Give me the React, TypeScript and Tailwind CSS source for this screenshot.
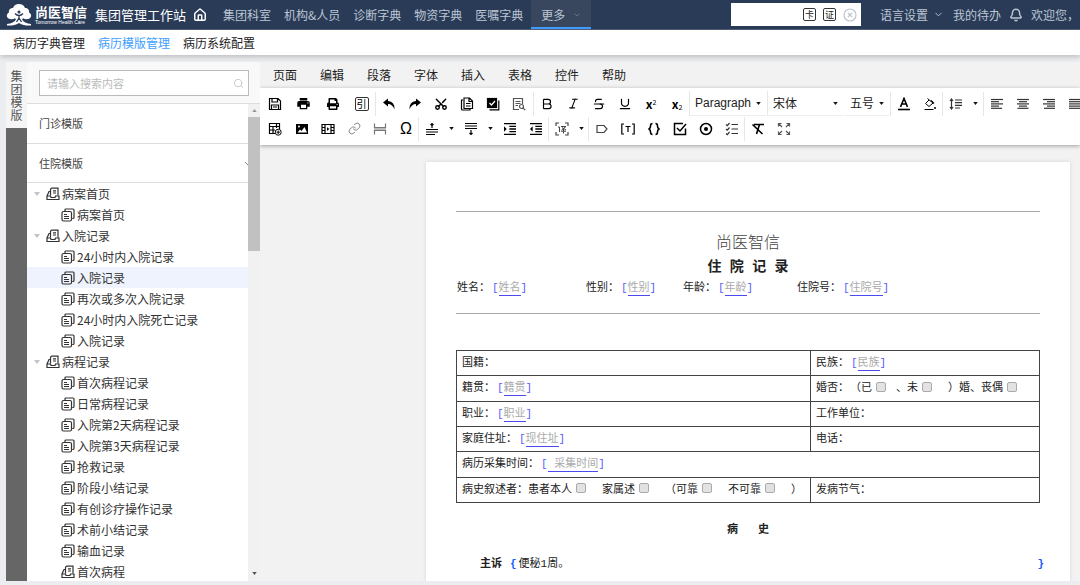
import type { ReactNode } from "react";
import {
  Bell,
  Bold,
  ChevronDown,
  House,
  Italic,
  Link,
  Scissors,
  Search,
  Strikethrough,
  Underline,
} from "lucide-react";
import {
  MdFormatIndentDecrease,
  MdFormatIndentIncrease,
  MdLocalPrintshop,
  MdReply,
} from "react-icons/md";
import { FaPrint } from "react-icons/fa";
import clsx from "clsx";

const NAV = ["集团科室", "机构&人员", "诊断字典", "物资字典", "医嘱字典"];
const SUB_NAV = ["病历字典管理", "病历模版管理", "病历系统配置"];
const MENUS = ["页面", "编辑", "段落", "字体", "插入", "表格", "控件", "帮助"];

type Node = { label: string; kind: "group" | "leaf" | "subgroup"; active?: boolean };

const TREE: Node[] = [
  { label: "病案首页", kind: "group" },
  { label: "病案首页", kind: "leaf" },
  { label: "入院记录", kind: "group" },
  { label: "24小时内入院记录", kind: "leaf" },
  { label: "入院记录", kind: "leaf", active: true },
  { label: "再次或多次入院记录", kind: "leaf" },
  { label: "24小时内入院死亡记录", kind: "leaf" },
  { label: "入院记录", kind: "leaf" },
  { label: "病程记录", kind: "group" },
  { label: "首次病程记录", kind: "leaf" },
  { label: "日常病程记录", kind: "leaf" },
  { label: "入院第2天病程记录", kind: "leaf" },
  { label: "入院第3天病程记录", kind: "leaf" },
  { label: "抢救记录", kind: "leaf" },
  { label: "阶段小结记录", kind: "leaf" },
  { label: "有创诊疗操作记录", kind: "leaf" },
  { label: "术前小结记录", kind: "leaf" },
  { label: "输血记录", kind: "leaf" },
  { label: "首次病程", kind: "subgroup" },
];

function Icon({ children, className }: { children: ReactNode; className?: string }) {
  return (
    <svg
      viewBox="0 0 14 14"
      className={clsx("size-[14px] shrink-0", className)}
      fill="none"
      stroke="currentColor"
      strokeWidth="1.2"
    >
      {children}
    </svg>
  );
}

function Logo() {
  return (
    <svg viewBox="0 0 26 22" className="h-[22px] w-[26px] shrink-0" fill="#fff">
      <path d="M13 0c3 0 5.200 1.500 6 4 2.800 0 4.500 2 4 4.500C25.500 9.500 26 13 23.500 14.500c-2 1-4.500.8-6.500-.2l-1 1.200c1.500 2.500 4.500 4 9 4.500v1.500c-5 .3-8.500-.5-12-2.500-3.500 2-7 2.800-12 2.500V20c4.500-.5 7.500-2 9-4.500l-1-1.200c-2 1-4.500 1.200-6.500.2C0 13 .5 9.500 3 8.500 2.500 6 4.200 4 7 4c.8-2.500 3-4 6-4z" />
      <circle cx="13" cy="8" r="1.500" fill="#2a3b57" />
      <path
        d="M9 9.500c1.300 1.500 2.500 2 4 2s2.700-.5 4-2M13 11v3.500M13 14l-2.500 4M13 14l2.500 4"
        stroke="#2a3b57"
        strokeWidth="1.300"
        fill="none"
      />
    </svg>
  );
}

function GroupIcon() {
  return (
    <Icon>
      <path d="M4.500 8.500V3Q4.500 1.200 6 1.200h6v7.300M7 3.800h3M7 6h3" />
      <path d="M4.500 4.500H3L1 9v3.500h12V9H9.500L9 10.500H5L4.500 9H1" />
    </Icon>
  );
}

function LeafIcon() {
  return (
    <Icon>
      <path d="M4 3.500V2q0-1 1-1h7q1 0 1 1v7.500q0 1-1 1h-.8" />
      <rect x="1" y="3.500" width="9.500" height="9.500" rx="1.500" />
      <path d="M3 6.500h3M3 8.500h5M3 10.500h5" />
    </Icon>
  );
}

function Tool({ label, wide, children }: { label: string; wide?: boolean; children: ReactNode }) {
  return (
    <button
      type="button"
      aria-label={label}
      className={clsx(
        "flex h-6 shrink-0 items-center justify-center text-black",
        wide ? "w-[29px]" : "w-[26px]",
      )}
    >
      {children}
    </button>
  );
}

function Caret() {
  return (
    <svg viewBox="0 0 6 4" className="pointer-events-none h-[3px] w-[5px] shrink-0" fill="#111">
      <path d="M0 0h6L3 4z" />
    </svg>
  );
}

function CaretTool({ label }: { label: string }) {
  return (
    <button type="button" aria-label={label} className="flex h-6 w-[13px] shrink-0 items-center justify-center">
      <Caret />
    </button>
  );
}

function Group({ children, first }: { children: ReactNode; first?: boolean }) {
  return (
    <div className={clsx("-ml-px flex shrink-0 items-center border-l", first ? "border-transparent" : "border-[#e6e6e6]")}>
      {children}
    </div>
  );
}

function Dropdown({ label, value, className }: { label: string; value: string; className: string }) {
  return (
    <div className={clsx("flex h-[25px] shrink-0 items-center border-b border-[#eee] pr-[5px] pl-[5px]", className)}>
      <select aria-label={label} className="-mr-2 min-w-0 flex-1 appearance-none bg-transparent text-xs text-[#222]">
        <option>{value}</option>
      </select>
      <Caret />
    </div>
  );
}

function AlignRows({ rows, align }: { rows: number[]; align: "left" | "center" | "right" }) {
  return (
    <Icon className="text-[#333]">
      {rows.map((w, i) => {
        const x = align === "left" ? 1 : align === "right" ? 13 - w : 7 - w / 2;
        return <path key={i} d={`M${x} ${2.5 + i * 2.2}h${w}`} />;
      })}
    </Icon>
  );
}

function Toolbar() {
  return (
    <div className="relative z-10 overflow-hidden bg-white pt-[3px] pb-1 shadow-[0_1px_4px_rgba(0,0,0,0.35)]">
      <div className="flex h-[25px] items-center">
        <Group first>
          <Tool wide label="保存">
            <Icon>
              <path d="M1.500 1.500h8.500l2.500 2.500v8.500h-11zM4 1.500V5h5.500V1.500M3.500 12.500V8h7v4.500M5 10h4" />
            </Icon>
          </Tool>
          <Tool wide label="打印"><MdLocalPrintshop size={15} /></Tool>
          <Tool wide label="打印预览"><FaPrint size={12} /></Tool>
          <Tool wide label="引用">
            <span className="flex size-[14px] items-center justify-center rounded-xs border border-[#333] text-[10px] leading-none">引</span>
          </Tool>
        </Group>
        <Group>
          <Tool label="撤销">
            <Icon>
              <path d="M6 1.500 1 5.500l5 4V7q4.500 0 6.500 5.500Q13 4.500 6 4z" fill="currentColor" stroke="none" />
            </Icon>
          </Tool>
          <Tool label="重做">
            <Icon className="-scale-x-100">
              <path d="M6 1.500 1 5.500l5 4V7q4.500 0 6.500 5.500Q13 4.500 6 4z" fill="currentColor" stroke="none" />
            </Icon>
          </Tool>
          <Tool label="剪切"><Scissors size={14} strokeWidth={2.5} className="-rotate-90" /></Tool>
          <Tool label="复制">
            <Icon>
              <path d="M3 3H1.500v9q0 1 1 1H10v-1.500M4 1h5.500L12.500 4v7.500H4zM9 1v3.500h3.500M6 6.500h4.500M6 9h4.500" />
            </Icon>
          </Tool>
          <Tool label="全选">
            <Icon>
              <rect x="1.500" y="1.500" width="9" height="9" fill="currentColor" />
              <path d="M12.800 3.500v9.300H3.500" />
              <path d="m3.500 6 2 2 3.500-4" stroke="#fff" />
            </Icon>
          </Tool>
          <Tool label="查找">
            <Icon className="text-[#555]">
              <path d="M7 12.500H1.500v-11h9V7M3.500 4.500h5M3.500 6.500h5M3.500 8.500H6" />
              <circle cx="9.500" cy="9.500" r="2" />
              <path d="m11 11 2.200 2.200" />
            </Icon>
          </Tool>
        </Group>
        <div className="w-[2px] shrink-0" />
        <Group>
          <Tool label="加粗"><Bold size={14} /></Tool>
          <Tool label="斜体"><Italic size={13} /></Tool>
          <Tool label="删除线"><Strikethrough size={14} /></Tool>
          <Tool label="下划线"><Underline size={14} /></Tool>
          <Tool label="上标">
            <span className="text-xs leading-none font-bold">x<sup className="text-[7px] font-normal">2</sup></span>
          </Tool>
          <Tool label="下标">
            <span className="text-xs leading-none font-bold">x<sub className="text-[7px] font-normal">2</sub></span>
          </Tool>
        </Group>
        <Group>
          <Dropdown label="段落格式" value="Paragraph" className="w-[76px] font-['Liberation_Sans',sans-serif]" />
        </Group>
        <div className="w-[2px] shrink-0" />
        <Group>
          <Dropdown label="字体" value="宋体" className="w-[75px]" />
        </Group>
        <div className="w-[2px] shrink-0" />
        <Dropdown label="字号" value="五号" className="w-[44px]" />
        <div className="w-[2px] shrink-0" />
        <Group>
          <Tool label="文字颜色">
            <Icon>
              <path d="M3.500 10 7 1.500 10.500 10M4.800 7h4.400" strokeWidth="1.600" />
              <path d="M1 12.500h12" strokeWidth="1.600" />
            </Icon>
          </Tool>
          <Tool label="背景颜色">
            <Icon>
              <path d="m4.500 1.500 5.500 4.500-4 3.500L2.500 6.500 6 3" strokeWidth="1" />
              <path d="m8 3.500 3 3M1.500 12.500h9" />
              <circle cx="12" cy="11" r="1" fill="currentColor" stroke="none" />
            </Icon>
          </Tool>
        </Group>
        <Group>
          <Tool label="行高">
            <Icon className="text-[#333]">
              <path d="M2.500 2.500v9M1 4l1.500-2L4 4M1 10l1.500 2L4 10M6 3h7M6 5.700h7M6 8.300h7M6 11h5" />
            </Icon>
          </Tool>
          <CaretTool label="行高选项" />
        </Group>
        <div className="w-[2px] shrink-0" />
        <Group>
          <Tool label="左对齐"><AlignRows rows={[12, 8, 12, 8, 11]} align="left" /></Tool>
          <Tool label="居中"><AlignRows rows={[12, 8, 12, 8, 11]} align="center" /></Tool>
          <Tool label="右对齐"><AlignRows rows={[12, 8, 12, 8, 11]} align="right" /></Tool>
          <Tool label="两端对齐"><AlignRows rows={[12, 12, 12, 12, 12]} align="left" /></Tool>
        </Group>
      </div>

      <div className="flex h-[25px] items-center">
        <Group first>
          <Tool wide label="插入表格">
            <Icon>
              <path d="M7 11.500H1.500v-10h10V7M1.500 4.500h10M1.500 8H7M5 4.500v7M8.500 1.500V6" />
              <circle cx="10.200" cy="10.200" r="3" strokeWidth="1" />
              <path d="M8.500 10.200h3.400M10.200 8.500v3.400" strokeWidth="1" />
            </Icon>
          </Tool>
          <Tool label="插入图片">
            <Icon>
              <rect x="1" y="2" width="12" height="10" fill="currentColor" stroke="none" />
              <path d="M2.500 10.500 5 7.500l1.500 1.500L9.500 5l2.500 5.500z" fill="#fff" stroke="none" />
              <circle cx="4" cy="4.500" r="1" fill="#fff" stroke="none" />
            </Icon>
          </Tool>
          <Tool label="插入视频">
            <Icon>
              <path d="M1 2.500h12v9H1zM4 2.500v9M10 2.500v9M1 5.500h3M1 8.500h3M10 5.500h3M10 8.500h3" />
              <path d="M6 5.200 8.500 7 6 8.800z" fill="currentColor" stroke="none" />
            </Icon>
          </Tool>
          <Tool label="链接"><Link size={13} strokeWidth={1.5} className="text-[#666]" /></Tool>
          <Tool label="分页符">
            <Icon className="text-[#777]">
              <path d="M1.500 1.500v4h11v-4M1.500 12.500v-4h11v4M1 7h12" />
            </Icon>
          </Tool>
          <Tool label="特殊字符"><span className="font-['Liberation_Sans',sans-serif] text-base leading-none">Ω</span></Tool>
        </Group>
        <Group>
          <Tool label="段前距">
            <Icon>
              <path d="M1 7.500h12M1 10h12M1 12.500h9M7 6V1.500M5.500 3 7 1.500 8.500 3" />
            </Icon>
          </Tool>
          <CaretTool label="段前距选项" />
          <Tool label="段后距">
            <Icon>
              <path d="M1 1.500h12M1 4h12M1 6.500h12M7 8v4.500M5.500 11 7 12.500 8.500 11" />
            </Icon>
          </Tool>
          <CaretTool label="段后距选项" />
          <Tool label="增加缩进"><MdFormatIndentIncrease size={16} /></Tool>
          <Tool label="减少缩进"><MdFormatIndentDecrease size={16} /></Tool>
        </Group>
        <Group>
          <Tool label="识别">
            <Icon className="text-[#444]">
              <path d="M4 1H1v3M10 1h3v3M4 13H1v-3M10 13h3v-3" />
              <path d="M3 5h1.500v5M6 4.500h5L6.500 8M7 5.500 11 8M6 9.200h5M8.500 7v4.500" strokeWidth="1" />
            </Icon>
          </Tool>
          <CaretTool label="识别选项" />
        </Group>
        <div className="w-px shrink-0" />
        <Group>
          <Tool label="标签">
            <Icon className="text-[#444]"><path d="M2 3.500h7L12 7l-3 3.500H2z" /></Icon>
          </Tool>
          <Tool label="文本框">
            <Icon>
              <path d="M3 2H.8v10H3M11 2h2.200v10H11M4.500 4.500h5M7 4.500v5.500" />
            </Icon>
          </Tool>
          <Tool label="变量">
            <Icon>
              <path d="M5.500 1.500Q3.500 1.500 3.500 4T1.500 7q2 .5 2 3t2 2.500M8.500 1.500q2 0 2 2.500t2 3q-2 .5-2 3t-2 2.500" strokeWidth="1.500" />
            </Icon>
          </Tool>
          <Tool label="复选框">
            <Icon>
              <path d="M12.500 6.500v6h-11v-11H10M4 6l3 3 6-7" strokeWidth="1.500" />
            </Icon>
          </Tool>
          <Tool label="单选框">
            <Icon>
              <circle cx="7" cy="7" r="5.500" strokeWidth="1.500" />
              <circle cx="7" cy="7" r="2" fill="currentColor" stroke="none" />
            </Icon>
          </Tool>
          <Tool label="清单">
            <Icon className="text-[#333]">
              <path d="M6.500 2.500H13M6.500 7H13M6.500 11.500H13M1 2.500l1.300 1.200L4.500 1M1 7l1.300 1.200L4.500 5.500M1 11.500l1.300 1.200L4.500 10" />
            </Icon>
          </Tool>
        </Group>
        <Group>
          <Tool label="清除格式">
            <Icon>
              <path d="M3 2.500h10M8.500 2.500 5.500 12M1.500 2.500l10 9.500" strokeWidth="1.600" />
            </Icon>
          </Tool>
          <Tool label="全屏">
            <Icon className="text-[#555]">
              <path d="M1.500 4.500v-3h3M9.500 1.500h3v3M1.500 9.500v3h3M9.500 12.500h3v-3M1.500 1.500 5 5M12.500 1.500 9 5M1.500 12.500 5 9M12.500 12.500 9 9" />
            </Icon>
          </Tool>
        </Group>
      </div>
    </div>
  );
}

// bracketed placeholder the doctor fills in
function Field({ children }: { children: ReactNode }) {
  return (
    <span className="ml-[2px] whitespace-pre text-[#5a5aff]">
      [<span className="border-b border-[#4a4af0] pb-px text-[#aaa]">{children}</span>]
    </span>
  );
}

function Check({ label, className }: { label: string; className?: string }) {
  return (
    <label className={clsx("flex items-center gap-1", className)}>
      {label}
      <input
        type="checkbox"
        className="mb-[3px] size-[10px] appearance-none rounded-xs border border-[#aaa] bg-[#e2e2e2]"
      />
    </label>
  );
}

function Paper() {
  const cell = "border border-[#444] px-[5px] py-0";
  return (
    <article className="mt-[17px] mr-[10px] ml-[166px] flex-1 bg-white px-[30px] pt-[49px] font-['Liberation_Mono','Noto_Sans_CJK_SC',monospace] text-[11px] leading-5 text-[#222] shadow-[0_0_4px_rgba(0,0,0,0.12)]">
      <hr className="border-[#aaa]" />
      <h1 className="mt-5 text-center text-base leading-6 font-light text-[#444]">尚医智信</h1>
      <h2 className="text-center text-sm leading-[22px] font-bold">住 院 记 录</h2>
      <div className="grid grid-cols-[129px_97px_114px_1fr] pl-px">
        <span>姓名：<Field>姓名</Field></span>
        <span>性别：<Field>性别</Field></span>
        <span>年龄：<Field>年龄</Field></span>
        <span>住院号：<Field>住院号</Field></span>
      </div>
      <hr className="mt-[15px] border-[#aaa]" />

      <table className="mt-9 h-[153px] w-full table-fixed border-collapse">
        <colgroup>
          <col className="w-[354px]" />
          <col />
        </colgroup>
        <tbody>
          <tr>
            <td className={cell}>国籍：</td>
            <td className={cell}>民族：<Field>民族</Field></td>
          </tr>
          <tr>
            <td className={cell}>籍贯：<Field>籍贯</Field></td>
            <td className={cell}>
              <div className="flex items-center whitespace-nowrap">
                <span>婚否：</span>
                <Check label="（已" className="ml-px" />
                <Check label="、未" className="ml-[10px]" />
                <Check label="）婚、丧偶" className="ml-4" />
              </div>
            </td>
          </tr>
          <tr>
            <td className={cell}>职业：<Field>职业</Field></td>
            <td className={cell}>工作单位：</td>
          </tr>
          <tr>
            <td className={cell}>家庭住址：<Field>现住址</Field></td>
            <td className={cell}>电话：</td>
          </tr>
          <tr>
            <td className={cell} colSpan={2}>病历采集时间：<Field> 采集时间</Field></td>
          </tr>
          <tr>
            <td className={cell}>
              <div className="flex items-center gap-4 whitespace-nowrap">
                <Check label="病史叙述者：患者本人" />
                <Check label="家属述" />
                <Check label="（可靠" />
                <Check label="不可靠" />
                <span>）</span>
              </div>
            </td>
            <td className={cell}>发病节气：</td>
          </tr>
        </tbody>
      </table>

      <h3 className="mt-[17px] text-center font-bold whitespace-pre">病   史</h3>
      <div className="-mr-1 mt-[14px] flex items-center pl-6">
        <b>主诉</b>
        <span className="mr-[2px] ml-2 font-bold text-blue-600">{"{"}</span>
        <span>便秘1周。</span>
        <span className="ml-auto font-bold text-blue-600">{"}"}</span>
      </div>
    </article>
  );
}

function Sidebar() {
  return (
    <aside className="flex w-[234px] shrink-0 flex-col border-r border-[#e4e4e4] bg-white">
      <div className="border-b border-[#ddd] bg-[#f9f9f9] pt-2 pr-[11px] pb-[7px] pl-3">
        <div className="flex h-[26px] items-center border border-[#bbb] bg-white pr-1 pl-[7px]">
          <input
            aria-label="搜索"
            placeholder="请输入搜索内容"
            className="min-w-0 flex-1 text-[11px] outline-none placeholder:text-[#bbb]"
          />
          <Search size={11} className="text-[#c0c4cc]" />
        </div>
      </div>
      <div className="flex min-h-0 flex-1">
        <div className="min-w-0 flex-1 overflow-hidden">
          <button type="button" className="block h-10 w-full border-b border-[#ddd] pl-3 text-left text-[11px] text-[#444]">
            门诊模版
          </button>
          <button type="button" className="flex h-[39px] w-full items-center justify-between border-b border-[#ddd] pl-3 text-left text-[11px] text-[#444]">
            住院模版
            <svg viewBox="0 0 3 3" className="size-[3px]" fill="none" stroke="#888">
              <path d="m0 0 3 3" />
            </svg>
          </button>
          <ul>
            {TREE.map((n, i) => (
              <li key={i}>
                <button
                  type="button"
                  className={clsx(
                    "flex h-[21px] w-full items-center gap-[2px] text-xs whitespace-nowrap text-[#333]",
                    n.active && "bg-[#eef3fd]",
                    n.kind === "group" ? "pl-[7px]" : "pl-[34px]",
                  )}
                >
                  {n.kind === "group" && (
                    <svg viewBox="0 0 6 4" className="mr-1 h-1 w-[6px]" fill="#c0c4cc">
                      <path d="M0 0h6L3 4z" />
                    </svg>
                  )}
                  {n.kind === "leaf" ? <LeafIcon /> : <GroupIcon />}
                  {n.label}
                </button>
              </li>
            ))}
          </ul>
        </div>
        <div className="flex w-[12px] shrink-0 flex-col items-center bg-[#f1f1f1]">
          <svg viewBox="0 0 6 4" className="my-[5px] h-[3px] w-[5px]" fill="#999"><path d="M0 4h6L3 0z" /></svg>
          <div className="h-[28%] w-full bg-[#c1c1c1]" />
          <svg viewBox="0 0 6 4" className="mt-auto mb-[6px] h-[3px] w-[5px]" fill="#555"><path d="M0 0h6L3 4z" /></svg>
        </div>
      </div>
    </aside>
  );
}

function Header() {
  return (
    <header className="flex h-[30px] shrink-0 items-center overflow-hidden border-b border-[#53617a] bg-[#2a3b57] pr-px pl-[6px] text-xs whitespace-nowrap text-[#bcc6d4]">
      <Logo />
      <div className="ml-[3px] shrink-0 text-white">
        <div className="text-[13px] leading-[14px] font-bold">尚医智信</div>
        <div className="font-['Liberation_Sans',sans-serif] text-[5px] leading-[6px]">Tomorrow Health Care</div>
      </div>
      <span className="ml-2 text-[13px] text-white">集团管理工作站</span>
      <a href="#home" aria-label="首页" className="ml-[7px]"><House size={14} strokeWidth={2.5} className="text-white" /></a>
      <nav className="ml-4 flex h-full items-center gap-[13px]">
        {NAV.map((n) => (
          <a key={n} href="#nav">{n}</a>
        ))}
        <a href="#more" className="-ml-[5px] flex h-full w-[60px] items-center gap-2 border-b-2 border-[#409eff] bg-[#38465e] pt-[2px] pl-[10px]">
          更多 <ChevronDown size={8} className="text-[#7a869a]" />
        </a>
      </nav>
      <div className="ml-auto flex h-[23px] w-[130px] shrink-0 items-center gap-[7px] bg-white pr-1">
        <input aria-label="患者查询" className="h-full min-w-0 flex-1 outline-none" />
        <button type="button" className="flex size-[13px] items-center justify-center rounded-xs border border-[#333] text-[9px] leading-none text-[#222]">卡</button>
        <button type="button" className="flex size-[13px] items-center justify-center rounded-xs border border-[#333] text-[9px] leading-none text-[#222]">证</button>
        <button type="button" aria-label="清空">
          <Icon className="text-[#c0c4cc]">
            <circle cx="7" cy="7" r="6" />
            <path d="m5 5 4 4M9 5 5 9" />
          </Icon>
        </button>
      </div>
      <a href="#language" className="ml-[19px] flex items-center gap-[5px]">
        语言设置 <ChevronDown size={11} />
      </a>
      <a href="#todo" className="ml-[9px]">我的待办</a>
      <a href="#notice" aria-label="通知" className="mx-2"><Bell size={14} strokeWidth={2.5} /></a>
      <span>欢迎您，</span>
    </header>
  );
}

export default function App() {
  return (
    <div className="flex h-screen flex-col overflow-hidden bg-[#ebedf0] font-['Noto_Sans_CJK_SC',sans-serif]">
      <Header />
      <nav className="flex h-[25px] shrink-0 items-center gap-[13px] bg-white pl-[13px] text-xs text-[#222] shadow-[0_2px_5px_rgba(0,0,0,0.2)]">
        {SUB_NAV.map((n, i) => (
          <a key={n} href="#sub" className={clsx(i === 1 && "text-[#409eff]")}>{n}</a>
        ))}
      </nav>

      <div className="mt-[7px] mb-1 flex min-h-0 flex-1 pl-[6px]">
        <div className="flex w-[21px] shrink-0 flex-col bg-[#666]">
          <button type="button" className="h-[66px] w-full bg-[#f5f5f5] px-[4px] text-xs leading-[13px] text-[#555]">
            集团模版
          </button>
        </div>
        <Sidebar />
        <main className="-ml-px flex min-w-0 flex-1 flex-col overflow-hidden bg-[#f2f2f2]">
          <div className="flex h-[26px] shrink-0 items-center gap-[23px] pl-[13px] text-xs text-[#222]">
            {MENUS.map((m) => (
              <button key={m} type="button">{m}</button>
            ))}
          </div>
          <Toolbar />
          <Paper />
        </main>
      </div>
    </div>
  );
}
